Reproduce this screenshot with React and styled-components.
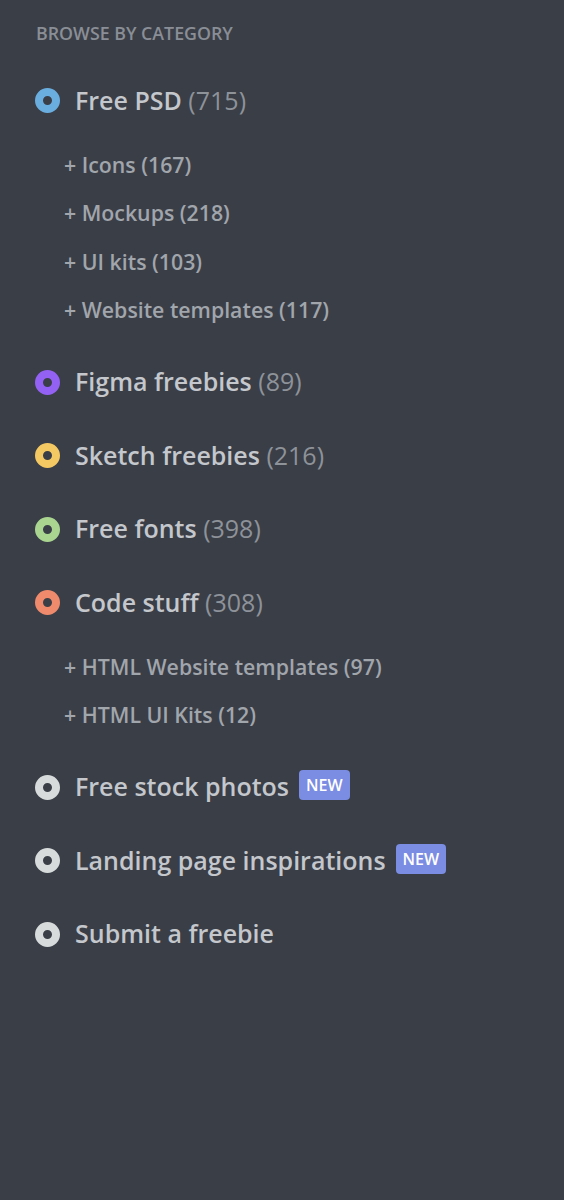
import React from "react";
import styled, { createGlobalStyle } from "styled-components";

const GlobalStyle = createGlobalStyle`
  html, body {
    margin: 0;
    padding: 0;
    background: #3a3e47;
  }
  body {
    font-family: "Open Sans", "Noto Sans", sans-serif;
  }
`;

const categories = [
  {
    name: "Free PSD",
    count: 715,
    color: "#6aaee0",
    subs: [
      ["Icons", 167],
      ["Mockups", 218],
      ["UI kits", 103],
      ["Website templates", 117],
    ],
  },
  { name: "Figma freebies", count: 89, color: "#9461f5" },
  { name: "Sketch freebies", count: 216, color: "#f4c862" },
  { name: "Free fonts", count: 398, color: "#a9d591" },
  {
    name: "Code stuff",
    count: 308,
    color: "#ef8a6c",
    subs: [
      ["HTML Website templates", 97],
      ["HTML UI Kits", 12],
    ],
  },
  { name: "Free stock photos", color: "#d8dbdb", isNew: true },
  { name: "Landing page inspirations", color: "#d8dbdb", isNew: true },
  { name: "Submit a freebie", color: "#d8dbdb" },
];

const Sidebar = () => {
  return (
    <Wrapper>
      <GlobalStyle />
      <Heading>Browse by category</Heading>
      <List>
        {categories.map((cat) => (
          <li key={cat.name}>
            <MainRow>
              <Dot $color={cat.color} />
              <Title>
                {cat.name}
                {cat.count !== undefined && <Count> ({cat.count})</Count>}
              </Title>
              {cat.isNew && <Badge>NEW</Badge>}
            </MainRow>
            {cat.subs && (
              <SubList>
                {cat.subs.map(([label, n]) => (
                  <SubRow key={label}>
                    + {label} ({n})
                  </SubRow>
                ))}
              </SubList>
            )}
          </li>
        ))}
      </List>
    </Wrapper>
  );
};

const Wrapper = styled.div`
  min-height: 1200px;
  box-sizing: border-box;
  padding: 23px 0 0 35px;
  background: #3a3e47;
`;

const Heading = styled.h2`
  margin: 0 0 20px 1px;
  font-size: 17.8px;
  line-height: 21px;
  font-weight: 600;
  text-transform: uppercase;
  letter-spacing: 0;
  color: #8a8e96;
`;

const List = styled.ul`
  list-style: none;
  margin: 0;
  padding: 0;
`;

const MainRow = styled.div`
  display: flex;
  align-items: center;
  height: 73.5px;
`;

const Dot = styled.span`
  flex: none;
  width: 25px;
  height: 25px;
  box-sizing: border-box;
  border-radius: 50%;
  border: 8px solid ${(p) => p.$color};
  background: #3a3e47;
  margin-right: 15px;
`;

const Title = styled.span`
  font-size: 25px;
  font-weight: 600;
  color: #c4c7cc;
  position: relative;
  top: -1px;
`;

const Count = styled.span`
  font-weight: 500;
  color: #8e9299;
`;

const Badge = styled.span`
  margin-left: 10px;
  padding: 0 7px;
  height: 30px;
  line-height: 30px;
  border-radius: 4px;
  background: #7b8ce3;
  color: #ffffff;
  font-size: 16px;
  font-weight: 600;
  position: relative;
  top: -2px;
`;

const SubList = styled.ul`
  list-style: none;
  margin: 0;
  padding: 3px 0 11px 29px;
`;

const SubRow = styled.li`
  height: 48.5px;
  line-height: 48.5px;
  font-size: 21.3px;
  font-weight: 600;
  color: #a1a5ac;
`;

export default function App() {
  return <Sidebar />;
}
